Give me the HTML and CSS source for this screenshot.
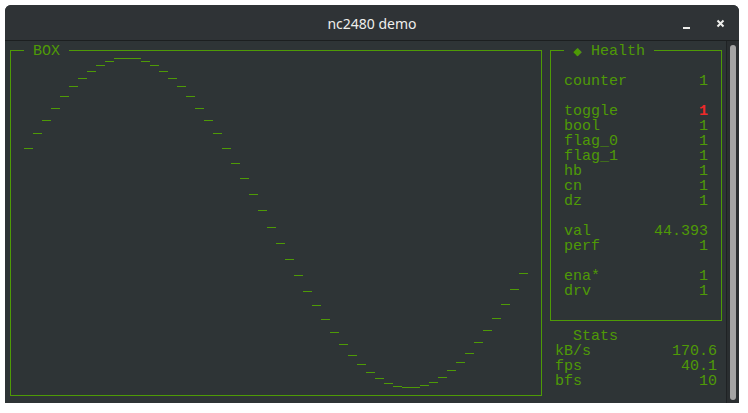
FILE: index.html
```html
<!DOCTYPE html>
<html>
<head>
<meta charset="utf-8">
<title>nc2480 demo</title>
<link rel="stylesheet" href="styles.css">
</head>
<body>
<div class="window">
  <header class="titlebar">
    <div></div>
    <div class="title">nc2480 demo</div>
    <div class="controls">
      <svg class="ctl" width="9" height="12" viewBox="0 0 9 12"><rect x="1" y="9" width="7" height="2" fill="#eeeeec"/></svg>
      <svg class="ctl" width="9" height="12" viewBox="0 0 9 12"><path d="M1.5 2.5 L7.5 8.5 M7.5 2.5 L1.5 8.5" stroke="#eeeeec" stroke-width="2" fill="none"/></svg>
    </div>
  </header>
  <div class="client">
    <div class="term">
      <section class="panel box-panel">
        <div class="frame"></div>
        <span class="ptitle">BOX</span>
        <svg class="wave" width="540" height="360" viewBox="6 43 540 360">
          <rect x="24" y="148" width="9" height="1"/>
          <rect x="33" y="133" width="9" height="1"/>
          <rect x="42" y="120" width="9" height="1"/>
          <rect x="51" y="108" width="9" height="1"/>
          <rect x="60" y="96" width="9" height="1"/>
          <rect x="69" y="86" width="9" height="1"/>
          <rect x="78" y="78" width="9" height="1"/>
          <rect x="87" y="71" width="9" height="1"/>
          <rect x="96" y="65" width="9" height="1"/>
          <rect x="105" y="61" width="9" height="1"/>
          <rect x="114" y="58" width="27" height="1"/>
          <rect x="141" y="61" width="9" height="1"/>
          <rect x="150" y="65" width="9" height="1"/>
          <rect x="159" y="71" width="9" height="1"/>
          <rect x="168" y="78" width="9" height="1"/>
          <rect x="177" y="86" width="9" height="1"/>
          <rect x="186" y="96" width="9" height="1"/>
          <rect x="195" y="108" width="9" height="1"/>
          <rect x="204" y="120" width="9" height="1"/>
          <rect x="213" y="133" width="9" height="1"/>
          <rect x="222" y="148" width="9" height="1"/>
          <rect x="231" y="163" width="9" height="1"/>
          <rect x="240" y="178" width="9" height="1"/>
          <rect x="249" y="194" width="9" height="1"/>
          <rect x="258" y="210" width="9" height="1"/>
          <rect x="267" y="227" width="9" height="1"/>
          <rect x="276" y="243" width="9" height="1"/>
          <rect x="285" y="259" width="9" height="1"/>
          <rect x="294" y="275" width="9" height="1"/>
          <rect x="303" y="291" width="9" height="1"/>
          <rect x="312" y="305" width="9" height="1"/>
          <rect x="321" y="319" width="9" height="1"/>
          <rect x="330" y="332" width="9" height="1"/>
          <rect x="339" y="344" width="9" height="1"/>
          <rect x="348" y="355" width="9" height="1"/>
          <rect x="357" y="364" width="9" height="1"/>
          <rect x="366" y="372" width="9" height="1"/>
          <rect x="375" y="378" width="9" height="1"/>
          <rect x="384" y="383" width="9" height="1"/>
          <rect x="393" y="386" width="9" height="1"/>
          <rect x="402" y="387" width="18" height="1"/>
          <rect x="420" y="385" width="9" height="1"/>
          <rect x="429" y="382" width="9" height="1"/>
          <rect x="438" y="377" width="9" height="1"/>
          <rect x="447" y="370" width="9" height="1"/>
          <rect x="456" y="362" width="9" height="1"/>
          <rect x="465" y="353" width="9" height="1"/>
          <rect x="474" y="342" width="9" height="1"/>
          <rect x="483" y="330" width="9" height="1"/>
          <rect x="492" y="318" width="9" height="1"/>
          <rect x="501" y="304" width="9" height="1"/>
          <rect x="510" y="289" width="9" height="1"/>
          <rect x="519" y="273" width="9" height="1"/>
        </svg>
      </section>
      <aside class="side">
        <section class="panel health">
          <div class="frame">
            <div class="row"><span>counter</span><span>1</span></div>
            <div class="row gap"><span>toggle</span><span class="alert">1</span></div>
            <div class="row"><span>bool</span><span>1</span></div>
            <div class="row"><span>flag_0</span><span>1</span></div>
            <div class="row"><span>flag_1</span><span>1</span></div>
            <div class="row"><span>hb</span><span>1</span></div>
            <div class="row"><span>cn</span><span>1</span></div>
            <div class="row"><span>dz</span><span>1</span></div>
            <div class="row gap"><span>val</span><span>44.393</span></div>
            <div class="row"><span>perf</span><span>1</span></div>
            <div class="row gap"><span>ena*</span><span>1</span></div>
            <div class="row"><span>drv</span><span>1</span></div>
          </div>
          <span class="ptitle"><span class="diamond">◆</span> Health</span>
        </section>
        <section class="stats">
          <div class="stats-title">Stats</div>
          <div class="row"><span>kB/s</span><span>170.6</span></div>
          <div class="row"><span>fps</span><span>40.1</span></div>
          <div class="row"><span>bfs</span><span>10</span></div>
        </section>
      </aside>
    </div>
    <div class="scrollbar"><div class="thumb"></div></div>
  </div>
</div>
</body>
</html>
```

FILE: styles.css
```css
html, body {
  margin: 0;
}
body {
  padding: 5px;
  background: #ffffff;
}
.window {
  width: 734px;
  height: 398px;
  border-radius: 6px 6px 0 0;
  overflow: hidden;
  background: #2e3436;
  display: flex;
  flex-direction: column;
}
.titlebar {
  height: 35px;
  flex: none;
  border-bottom: 1px solid #1c1f20;
  background: #2f3336;
  display: grid;
  grid-template-columns: 1fr auto 1fr;
  align-items: center;
}
.title {
  font-family: "Noto Sans", "Open Sans", sans-serif;
  font-size: 14px;
  color: #eeeeec;
  padding-top: 1px;
}
.controls {
  justify-self: end;
  display: flex;
  gap: 25px;
  padding-right: 14px;
  padding-top: 2px;
}
.ctl {
  display: block;
}
.client {
  flex: 1;
  display: flex;
  padding-left: 1px;
}
.term {
  margin-top: 2px;
  width: 720px;
  height: 360px;
  display: grid;
  grid-template-columns: 540px 180px;
  font-family: "Liberation Mono", "DejaVu Sans Mono", monospace;
  font-size: 15px;
  line-height: 15px;
  color: #4e9a06;
}
.panel {
  position: relative;
  box-sizing: border-box;
  padding: 7px 4px;
}
.frame {
  box-sizing: border-box;
  height: 100%;
  border: 1px solid #4e9a06;
}
.box-panel {
  height: 360px;
}
.ptitle {
  position: absolute;
  top: 1px;
  left: 18px;
  padding: 0 9px;
  background: #2e3436;
  white-space: pre;
}
.diamond {
  display: inline-block;
  width: 9px;
  text-align: center;
  font-family: "DejaVu Sans", sans-serif;
  font-size: 11px;
  vertical-align: top;
}
.wave {
  position: absolute;
  left: 0;
  top: 0;
  fill: #4e9a06;
}
.side {
  display: flex;
  flex-direction: column;
}
.health {
  height: 285px;
}
.health .frame {
  padding: 23px 13px 0 13px;
}
.row {
  display: flex;
  justify-content: space-between;
  white-space: pre;
}
.gap {
  margin-top: 15px;
}
.alert {
  color: #ef2929;
  font-weight: bold;
}
.stats {
  padding: 1px 9px 0 9px;
}
.stats-title {
  padding-left: 18px;
}
.scrollbar {
  width: 12px;
  border-left: 1px solid #1f2224;
  background: #2a2e30;
  padding: 4px 0 3px 3px;
  box-sizing: content-box;
  display: flex;
}
.thumb {
  width: 6px;
  border-radius: 3px;
  background: #a4a4a4;
  flex: none;
}
```
